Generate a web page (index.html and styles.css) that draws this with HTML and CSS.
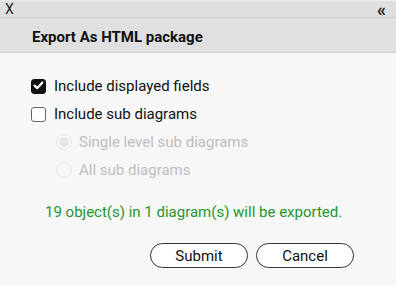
FILE: index.html
```html
<!DOCTYPE html>
<html lang="en">
<head>
    <meta charset="UTF-8">
    <title>Export As HTML package</title>
    <link rel="stylesheet" href="styles.css">
</head>
<body>
    <div class="top-bar">
        <div class="top-close">X</div>
        <div class="top-collapse">&laquo;</div>
    </div>
    <div class="title-bar">Export As HTML package</div>

    <div class="panel">
        <div class="options">
            <label class="row">
                <span class="box checked">
                    <svg width="15" height="15" viewBox="0 0 15 15">
                        <path d="M3.6 7.6 L6.2 10.2 L11.4 4.6" fill="none" stroke="#fff" stroke-width="2.2" stroke-linecap="round" stroke-linejoin="round"/>
                    </svg>
                </span>
                <span class="label">Include displayed fields</span>
            </label>
            <label class="row">
                <span class="box"></span>
                <span class="label">Include sub diagrams</span>
            </label>
            <label class="row sub disabled">
                <span class="radio selected"><span class="dot"></span></span>
                <span class="label">Single level sub diagrams</span>
            </label>
            <label class="row sub disabled">
                <span class="radio"></span>
                <span class="label">All sub diagrams</span>
            </label>
        </div>

        <div class="summary">19 object(s) in 1 diagram(s) will be exported.</div>

        <div class="actions">
            <button class="btn">Submit</button>
            <button class="btn">Cancel</button>
        </div>
    </div>
</body>
</html>
```

FILE: styles.css
```css
* {
    margin: 0;
    padding: 0;
    box-sizing: border-box;
}
body {
    font-family: Roboto, "Liberation Sans", sans-serif;
    font-size: 15px;
    color: #111;
    background-color: #f7f7f7;
    height: 100vh;
    overflow: hidden;
}
.top-bar {
    display: flex;
    justify-content: space-between;
    align-items: center;
    height: 18px;
    padding: 0 10px 0 5px;
    background-color: #dfdfdf;
    border-top: 1px solid #ececec;
    border-bottom: 1px solid #cbcbcb;
    font-size: 14px;
    color: #222;
}
.top-collapse {
    font-size: 18px;
    font-weight: bold;
    line-height: 16px;
    padding-top: 1px;
}
.title-bar {
    display: flex;
    align-items: center;
    height: 35px;
    padding-left: 32px;
    padding-top: 4px;
    background-color: #e0e0e0;
    border-bottom: 1px solid #d2d2d2;
    font-weight: bold;
    font-size: 15px;
}
.panel {
    display: flex;
    flex-direction: column;
    padding-top: 19px;
}
.options {
    display: flex;
    flex-direction: column;
    padding-left: 31px;
}
.row {
    display: flex;
    align-items: center;
    height: 28px;
}
.box {
    width: 15px;
    height: 15px;
    border: 1.5px solid #666;
    border-radius: 3px;
    background-color: #fff;
    margin-right: 8px;
    display: flex;
}
.box.checked {
    background-color: #111;
    border-color: #111;
}
.box.checked svg {
    margin: -1.5px;
}
.sub {
    padding-left: 25px;
}
.radio {
    width: 16px;
    height: 16px;
    border: 1px solid #e8e8e8;
    border-radius: 50%;
    margin-right: 7px;
    display: flex;
    align-items: center;
    justify-content: center;
}
.radio .dot {
    width: 10px;
    height: 10px;
    border-radius: 50%;
    background-color: #e6e6e6;
}
.disabled .label {
    color: #bdbdbd;
}
.summary {
    margin-top: 19px;
    padding-left: 45px;
    color: #25962d;
    line-height: 18px;
}
.actions {
    display: flex;
    justify-content: flex-end;
    gap: 8px;
    margin-top: 22px;
    padding-right: 42px;
}
.btn {
    width: 98px;
    height: 25px;
    border: 1px solid #333;
    border-radius: 13px;
    background-color: #fff;
    font-family: Roboto, "Liberation Sans", sans-serif;
    font-size: 15px;
    color: #111;
}
```
